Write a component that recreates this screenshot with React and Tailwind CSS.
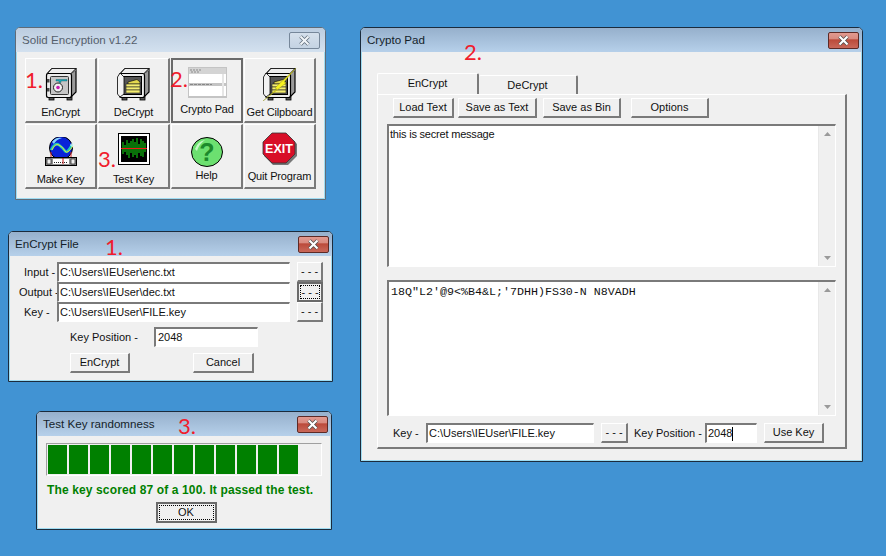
import React from "react";

const raised = "border-t border-l border-t-white border-l-white border-r-2 border-b-2 border-r-[#7a7a7a] border-b-[#7a7a7a]";
const sunken = "border-t-2 border-l-2 border-t-[#7a7a7a] border-l-[#7a7a7a] border-r border-b border-r-white border-b-white bg-white";

function Win({ title, active = true, className, children }) {
  return (
    <div className={`absolute flex flex-col overflow-hidden rounded-t-[5px] border bg-[#f0f0f0] shadow-[inset_0_0_0_1px_#9fdcf2] ${active ? "border-[#1b2b3c]" : "border-[#5f6b78]"} ${className}`}>
      <div className={`flex h-[24px] shrink-0 items-center justify-between bg-gradient-to-b pr-[3px] pl-[6px] text-[11.6px] ${active ? "from-[#96b0cc] to-[#b6d0ea] text-[#141e2a]" : "from-[#bccde0] to-[#d3e1ef] text-[#55606c]"}`}>
        <span>{title}</span>
        <CloseBtn active={active} />
      </div>
      {children}
    </div>
  );
}

function CloseBtn({ active }) {
  return (
    <div className={`flex h-[17px] w-[31px] items-center justify-center rounded-[2px] border ${active ? "border-[#5d2a26] bg-[linear-gradient(#e29a90_0%,#d98a7f_40%,#bb4a3a_45%,#c9685a_100%)]" : "mr-[2px] border-[#76879a] bg-[linear-gradient(#d5e0ec,#c4d3e3)]"}`}>
      <svg width="13" height="11" viewBox="0 0 13 11">
        <path d="M2.5 1.5L10.5 9.5M10.5 1.5L2.5 9.5" stroke={active ? "#4a4a4a" : "#5d6a78"} strokeWidth="3.6" />
        <path d="M2.5 1.5L10.5 9.5M10.5 1.5L2.5 9.5" stroke={active ? "#ffffff" : "#f0f4f8"} strokeWidth="2.2" />
      </svg>
    </div>
  );
}

function Btn({ children, className = "", focus = false }) {
  return (
    <div className={`flex shrink-0 items-center justify-center bg-[#f0f0f0] ${raised} ${className}`}>
      {focus ? (
        <span className="flex h-full w-full items-center justify-center border border-dotted border-black">{children}</span>
      ) : (
        children
      )}
    </div>
  );
}

function Field({ children, className = "" }) {
  return (
    <div className={`flex shrink-0 items-center overflow-hidden pl-[1px] ${sunken} ${className}`}>
      {children}
    </div>
  );
}

function Mark({ className, children }) {
  return (
    <span className={`absolute text-[22px] leading-none text-[#f01c2c] ${className}`} style={{ fontFamily: "Lato, sans-serif" }}>
      {children}
    </span>
  );
}

function Safe({ open = false, bolt = false }) {
  return (
    <svg width="34" height="34" viewBox="0 0 34 34">
      <rect x="5" y="29" width="5" height="4" fill="#555" stroke="#000" strokeWidth="0.8" />
      <rect x="23" y="29" width="5" height="4" fill="#555" stroke="#000" strokeWidth="0.8" />
      {/* side and top faces */}
      <path d="M3 7L8 1.5H32V25L27 30H3Z" fill="#9a9a9a" stroke="#000" strokeWidth="1.2" />
      <path d="M8 1.5H32L27 7H3Z" fill="#ededed" stroke="#000" strokeWidth="0.7" />
      <path d="M27 6L31 2M29 6L32 3" stroke="#777" strokeWidth="0.9" />
      {/* front face */}
      <rect x="2.5" y="6.5" width="25" height="24" rx="2" fill="#ececec" stroke="#000" strokeWidth="1.2" />
      {open ? (
        <>
          <rect x="6.5" y="9.5" width="18" height="18" fill="#555" stroke="#000" />
          <path d="M7 10L3 6L0.5 10V27L3 30L7 27Z" fill="#f2f2f2" stroke="#000" strokeWidth="0.8" />
          <path d="M11 15L20 12.5L23 15V17H11Z" fill="#e4d84e" stroke="#000" strokeWidth="0.6" />
          <rect x="9" y="17" width="14" height="3" fill="#f5ee70" stroke="#222" strokeWidth="0.6" />
          <rect x="9" y="20" width="14" height="3" fill="#f5ee70" stroke="#222" strokeWidth="0.6" />
          <rect x="9" y="23" width="14" height="3" fill="#f5ee70" stroke="#222" strokeWidth="0.6" />
        </>
      ) : (
        <>
          <rect x="6.5" y="9.5" width="18" height="18" rx="1" fill="#c6c6c6" stroke="#333" />
          <rect x="3" y="12" width="2.5" height="3.5" fill="#444" />
          <rect x="3" y="21" width="2.5" height="3.5" fill="#444" />
          <circle cx="14" cy="20.5" r="4.5" fill="#f2f2f2" stroke="#222" />
          <circle cx="14" cy="20.5" r="1.8" fill="#c81fb0" />
          <path d="M12 12.5H23V14H17V15.5H15V14H12Z" fill="#18a8b8" stroke="#0a5560" strokeWidth="0.4" />
        </>
      )}
      {bolt && (
        <path d="M0 34L14 22L12 21L33 1L21 15L23 16Z" fill="#f6f21e" stroke="#8a8a10" strokeWidth="0.4" />
      )}
    </svg>
  );
}

function PadThumb() {
  return (
    <svg width="39" height="31" viewBox="0 0 39 31">
      <rect width="39" height="31" fill="#c4c4c4" />
      <rect x="1" y="1" width="37" height="6" fill="#d4d4d4" />
      <path d="M2 3H14M3 5H12" stroke="#8a8a8a" strokeWidth="1" strokeDasharray="2 1" />
      <rect x="1" y="7" width="37" height="9" fill="#ffffff" />
      <rect x="1" y="19" width="37" height="10" fill="#ffffff" />
      <path d="M2 17.5H24" stroke="#888" strokeDasharray="3 1" />
      <rect x="34" y="7" width="2" height="22" fill="#e6e6e6" />
    </svg>
  );
}

function Globe() {
  return (
    <svg width="32" height="29" viewBox="0 0 32 29">
      <circle cx="16" cy="11" r="11.5" fill="#0a22d8" stroke="#000" />
      <path d="M7 5Q11 -0.5 17 1Q11 2.5 9 7Z" fill="#8ad4ff" />
      <path d="M6 13Q10 5 14 8T20 14T27 8" fill="none" stroke="#1cc8c0" strokeWidth="2.6" />
      <path d="M7 13Q10 6 14 8T20 14T28 9" fill="none" stroke="#eee23a" strokeWidth="1" />
      <path d="M25 8H29M27 6V10" stroke="#dff" strokeWidth="1" />
      <path d="M6 15V20M26 15V20" stroke="#d02020" strokeWidth="1" />
      <rect x="0.5" y="20.5" width="31" height="8" fill="#8e8e8e" stroke="#000" />
      <rect x="2" y="22" width="4" height="5" fill="#eee" stroke="#222" strokeWidth="0.7" />
      <rect x="26" y="22" width="4" height="5" fill="#eee" stroke="#222" strokeWidth="0.7" />
      <rect x="8" y="22" width="16" height="5" fill="#fff" />
      <path d="M9 25.5H23" stroke="#222" strokeDasharray="1 1" />
      <path d="M18 21V27" stroke="#c01010" />
    </svg>
  );
}

function Wave() {
  const bars = "M5 9V21M7 12V19M9 7V22M11 10V25M13 8V20M15 6V24M17 9V22M19 5V25M21 11V20M23 6V23M25 8V24M27 10V19";
  return (
    <svg width="32" height="32" viewBox="0 0 32 32">
      <rect x="0.5" y="0.5" width="31" height="31" fill="#fff" stroke="#000" />
      <rect x="3" y="3" width="26" height="26" fill="#000" />
      <path d={bars} stroke="#12e012" strokeWidth="1" />
      <path d="M3 15.5H29" stroke="#f01818" />
    </svg>
  );
}

function HelpBall() {
  return (
    <svg width="32" height="30" viewBox="0 0 32 30">
      <ellipse cx="16" cy="15" rx="15.5" ry="14.5" fill="#6ce070" stroke="#000" />
      <path d="M4 12Q7 4 14 3Q8 7 6 14Z" fill="#c8f8c8" />
      <text x="16" y="24" textAnchor="middle" fontSize="25" fontWeight="700" fill="#1c8a2c" style={{ fontFamily: "Liberation Sans, sans-serif" }}>?</text>
    </svg>
  );
}

function ExitSign() {
  return (
    <svg width="36" height="34" viewBox="0 0 36 34">
      <path d="M11 3H26L35 12V24L26 33H11L2 24V12Z" fill="#777" />
      <path d="M10 1H24L33 10V22L24 31H10L1 22V10Z" fill="#d80f28" stroke="#333" strokeWidth="0.8" />
      <text x="17" y="20.5" textAnchor="middle" fontSize="12.5" fontWeight="700" fill="#fff" style={{ fontFamily: "Liberation Sans, sans-serif" }}>EXIT</text>
    </svg>
  );
}

function ToolBtn({ icon, label, padTop, gap, focus = false }) {
  return (
    <div className={`flex h-[65px] flex-col items-center bg-[#f0f0f0] ${focus ? "border-2 border-[#6a6a6a]" : raised} ${padTop}`}>
      <div className="flex shrink-0 justify-center">{icon}</div>
      <span className={`whitespace-nowrap tracking-[-0.15px] ${gap}`}>{label}</span>
    </div>
  );
}

function Scroll() {
  return (
    <div className="flex w-[17px] shrink-0 flex-col items-center justify-between border-l border-[#e8e8e8] bg-[#f0f0f0] py-[6px]">
      <svg width="7" height="4" viewBox="0 0 7 4"><path d="M3.5 0L7 4H0Z" fill="#9a9a9a" /></svg>
      <svg width="7" height="4" viewBox="0 0 7 4"><path d="M3.5 4L7 0H0Z" fill="#9a9a9a" /></svg>
    </div>
  );
}

function PathRow({ label, value, btnFocus = false, labelClass }) {
  return (
    <div className="flex h-[20px] items-stretch">
      <span className={`w-[41px] shrink-0 self-center whitespace-nowrap ${labelClass}`}>{label}</span>
      <Field className="w-[233px]">{value}</Field>
      {btnFocus ? (
        <div className="ml-[7px] flex w-[26px] shrink-0 border-2 border-[#6a6a6a] p-[1px]">
          <span className="flex h-full w-full items-center justify-center border border-dotted border-black">- - -</span>
        </div>
      ) : (
        <Btn className="ml-[7px] w-[26px]">- - -</Btn>
      )}
    </div>
  );
}

export default function App() {
  return (
    <div
      className="relative h-[556px] w-[886px] overflow-hidden bg-[#4193d3] text-[11px] leading-none text-[#111]"
      style={{ fontFamily: '"Liberation Sans", Arial, sans-serif' }}
    >
      {/* main launcher */}
      <Win title="Solid Encryption v1.22" active={false} className="top-[27px] left-[15px] h-[173px] w-[311px]">
        <div className="grid grid-cols-[repeat(4,72px)] gap-[1px] pt-[6px] pl-[9px]">
          <ToolBtn icon={<Safe />} label="EnCrypt" padTop="pt-[8px]" gap="mt-[6px]" />
          <ToolBtn icon={<Safe open />} label="DeCrypt" padTop="pt-[8px]" gap="mt-[6px]" />
          <ToolBtn icon={<PadThumb />} label="Crypto Pad" padTop="pt-[7px]" gap="mt-[6px]" focus />
          <ToolBtn icon={<Safe open bolt />} label="Get Cilpboard" padTop="pt-[8px]" gap="mt-[6px]" />
          <ToolBtn icon={<Globe />} label="Make Key" padTop="pt-[12px]" gap="mt-[8px]" />
          <ToolBtn icon={<Wave />} label="Test Key" padTop="pt-[8px]" gap="mt-[9px]" />
          <ToolBtn icon={<HelpBall />} label="Help" padTop="pt-[12px]" gap="mt-[3px]" />
          <ToolBtn icon={<ExitSign />} label="Quit Program" padTop="pt-[7px]" gap="mt-[5px]" />
        </div>
      </Win>

      {/* encrypt dialog */}
      <Win title="EnCrypt File" className="top-[231px] left-[8px] h-[151px] w-[325px]">
        <div className="flex flex-col pt-[6px] pl-[7px]">
          <PathRow label="Input -" labelClass="pl-[8px]" value="C:\Users\IEUser\enc.txt" />
          <PathRow label="Output -" labelClass="pl-[3px]" value="C:\Users\IEUser\dec.txt" btnFocus />
          <PathRow label="Key -" labelClass="pl-[8px]" value="C:\Users\IEUser\FILE.key" />
          <div className="mt-[5px] flex h-[20px] items-center">
            <span className="w-[84px] shrink-0 pl-[54px] whitespace-nowrap">Key Position -</span>
            <Field className="ml-[54px] h-[20px] w-[104px] pl-[2px]">2048</Field>
          </div>
          <div className="mt-[6px] flex h-[20px] pl-[54px]">
            <Btn className="w-[60px]">EnCrypt</Btn>
            <Btn className="ml-[63px] w-[61px]">Cancel</Btn>
          </div>
        </div>
      </Win>

      {/* randomness test */}
      <Win title="Test Key randomness" className="top-[411px] left-[36px] h-[119px] w-[296px]">
        <div className="flex flex-col pt-[7px] pl-[9px]">
          <div className="flex h-[33px] w-[276px] gap-[2px] border border-t-[#a0a0a0] border-r-white border-b-white border-l-[#a0a0a0] p-[1px]">
            {Array.from({ length: 12 }).map((_, i) => (
              <div key={i} className="h-full w-[19px] bg-[#008000]" />
            ))}
          </div>
          <p className="mt-[8px] pl-[1px] text-[12px] font-bold tracking-[0.13px] whitespace-nowrap text-[#008000]">
            The key scored 87 of a 100. It passed the test.
          </p>
          <div className="mt-[6px] flex justify-center pr-[5px]">
            <div className="flex h-[21px] w-[61px] items-center justify-center border-2 border-[#6a6a6a] bg-[#f0f0f0] p-[1px]">
              <span className="flex h-full w-full items-center justify-center border border-dotted border-black">OK</span>
            </div>
          </div>
        </div>
      </Win>

      {/* crypto pad */}
      <Win title="Crypto Pad" className="top-[27px] left-[360px] h-[435px] w-[503px]">
        <div className="flex flex-1 flex-col pt-[21px] pl-[16px]">
          <div className="flex h-[21px] items-end">
            <div className="relative z-10 flex h-[21px] w-[102px] items-center justify-center rounded-t-[2px] border-t border-l border-r-2 border-t-white border-r-[#7a7a7a] border-l-white bg-[#f0f0f0] pb-[2px]">EnCrypt</div>
            <div className="flex h-[19px] w-[99px] items-center justify-center rounded-t-[2px] border-t border-r-2 border-t-white border-r-[#7a7a7a]">DeCrypt</div>
          </div>
          <div className="flex h-[355px] w-[470px] flex-col border-t border-r-2 border-b-2 border-l border-t-white border-r-[#7a7a7a] border-b-[#7a7a7a] border-l-white pt-[3px] pl-[9px]">
            <div className="flex h-[20px] pl-[6px]">
              <Btn className="w-[61px]">Load Text</Btn>
              <Btn className="ml-[4px] w-[79px]">Save as Text</Btn>
              <Btn className="ml-[6px] w-[78px]">Save as Bin</Btn>
              <Btn className="ml-[10px] w-[78px]">Options</Btn>
            </div>
            <div className={`mt-[6px] flex h-[143px] w-[449px] items-stretch ${sunken}`}>
              <div className="flex-1 pt-[3px] pl-[1px] tracking-[-0.2px]">this is secret message</div>
              <Scroll />
            </div>
            <div className={`mt-[13px] flex h-[136px] w-[449px] items-stretch ${sunken}`}>
              <div className="flex-1 pt-[5px] pl-[2px] text-[11.67px] whitespace-pre" style={{ fontFamily: '"Liberation Mono", monospace' }}>
                {`18Q"L2'@9<%B4&L;'7DHH)FS30-N N8VADH`}
              </div>
              <Scroll />
            </div>
            <div className="mt-[7px] flex h-[20px] items-center">
              <span className="w-[39px] shrink-0 pl-[6px]">Key -</span>
              <Field className="h-[20px] w-[168px]">C:\Users\IEUser\FILE.key</Field>
              <Btn className="ml-[7px] h-[20px] w-[27px]">- - -</Btn>
              <span className="ml-[6px] w-[71px] shrink-0 whitespace-nowrap">Key Position -</span>
              <Field className="h-[20px] w-[52px]">
                2048<span className="h-[14px] w-[1px] bg-black" />
              </Field>
              <Btn className="ml-[7px] h-[20px] w-[60px]">Use Key</Btn>
            </div>
          </div>
        </div>
      </Win>

      <Mark className="top-[69px] left-[25px]">1.</Mark>
      <Mark className="top-[68px] left-[170px]">2.</Mark>
      <Mark className="top-[148px] left-[98px]">3.</Mark>
      <Mark className="top-[236px] left-[105px]">1.</Mark>
      <Mark className="top-[41px] left-[464px]">2.</Mark>
      <Mark className="top-[415px] left-[178px]">3.</Mark>
    </div>
  );
}
